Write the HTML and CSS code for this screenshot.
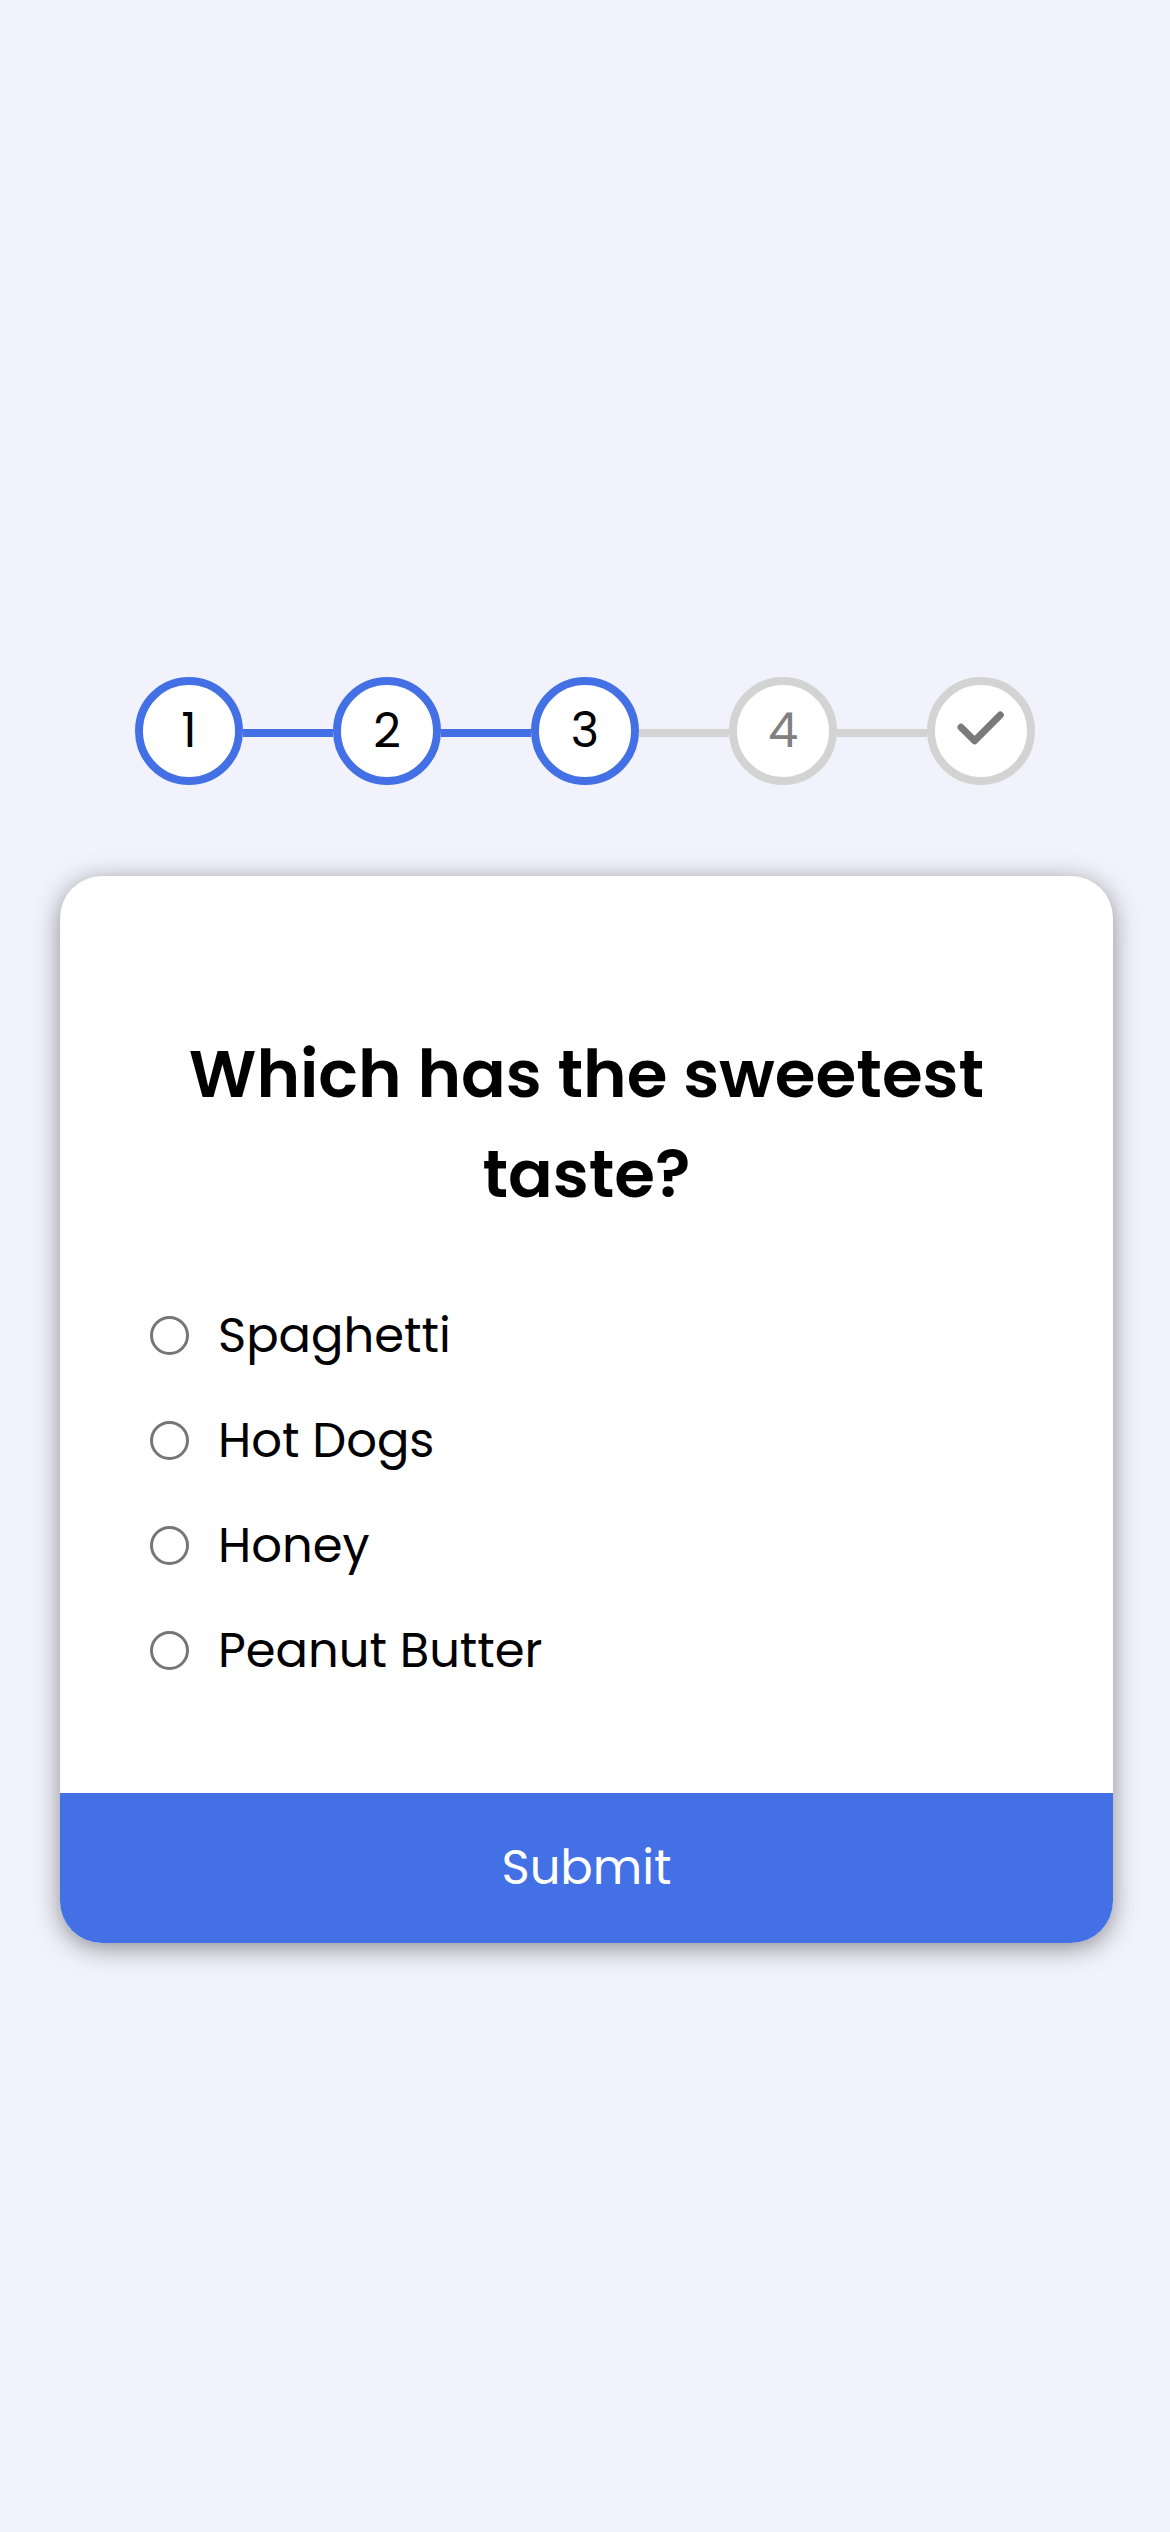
FILE: index.html
```html
<!DOCTYPE html>
<html lang="en">
<head>
<meta charset="utf-8">
<title>Quiz</title>
<link rel="stylesheet" href="styles.css">
</head>
<body>
<main class="page">
  <ol class="stepper">
    <li class="step step-done">1</li>
    <li class="bar bar-done"></li>
    <li class="step step-done">2</li>
    <li class="bar bar-done"></li>
    <li class="step step-done">3</li>
    <li class="bar"></li>
    <li class="step">4</li>
    <li class="bar"></li>
    <li class="step">
      <svg class="check" width="50" height="40" viewBox="0 0 50 40" aria-hidden="true">
        <path d="M5 16.3 L18.6 29.7 L44.3 4" fill="none" stroke="#7a7a7a" stroke-width="7" stroke-linecap="round" stroke-linejoin="round"/>
      </svg>
    </li>
  </ol>

  <form class="card">
    <div class="card-body">
      <h2 class="question">Which has the sweetest taste?</h2>
      <div class="options">
        <label class="option"><input type="radio" name="q" class="radio"><span>Spaghetti</span></label>
        <label class="option"><input type="radio" name="q" class="radio"><span>Hot Dogs</span></label>
        <label class="option"><input type="radio" name="q" class="radio"><span>Honey</span></label>
        <label class="option"><input type="radio" name="q" class="radio"><span>Peanut Butter</span></label>
      </div>
    </div>
    <button type="button" class="submit">Submit</button>
  </form>
</main>
</body>
</html>
```

FILE: styles.css
```css
* {
  box-sizing: border-box;
}

html, body {
  margin: 0;
  padding: 0;
}

body {
  background: #f1f2fb;
  font-family: "Poppins", "Inter", "Noto Sans", sans-serif;
  color: #000;
  min-height: 2532px;
}

.page {
  padding-top: 677px;
}

.stepper {
  list-style: none;
  margin: 0;
  padding: 0;
  display: flex;
  justify-content: center;
  align-items: center;
}

.step {
  width: 108px;
  height: 108px;
  border-radius: 50%;
  border: 8px solid #d3d3d3;
  background: #fff;
  display: flex;
  align-items: center;
  justify-content: center;
  font-size: 48px;
  font-weight: 400;
  color: #808080;
  flex: 0 0 auto;
}

.step-done {
  border-color: #4370e5;
  color: #000;
}

.check {
  display: block;
}

.bar {
  width: 90px;
  height: 8px;
  background: #d3d3d3;
  flex: 0 0 auto;
  margin-top: 3px;
}

.bar-done {
  background: #4370e5;
}

.card {
  width: 1053px;
  margin: 91px 0 0 60px;
  background: #fff;
  border-radius: 42px;
  box-shadow: 0 5px 26px rgba(0, 0, 0, 0.42);
  overflow: hidden;
}

.card-body {
  padding: 148px 90px 91px;
}

.question {
  margin: 0;
  text-align: center;
  font-size: 66px;
  line-height: 100px;
  font-weight: 600;
}

.options {
  margin-top: 58px;
  display: flex;
  flex-direction: column;
}

.option {
  height: 105px;
  display: flex;
  align-items: center;
  gap: 29px;
  font-size: 48px;
  font-weight: 400;
  padding-top: 2px;
}

.radio {
  appearance: none;
  -webkit-appearance: none;
  margin: 0;
  width: 39px;
  height: 39px;
  border: 3px solid #767676;
  border-radius: 50%;
  background: #fff;
  flex: 0 0 auto;
}

.submit {
  display: block;
  width: 100%;
  height: 150px;
  border: 0;
  margin: 0;
  background: #4370e5;
  color: #fff;
  font-family: inherit;
  font-size: 48px;
  font-weight: 400;
  padding: 0;
}
```
